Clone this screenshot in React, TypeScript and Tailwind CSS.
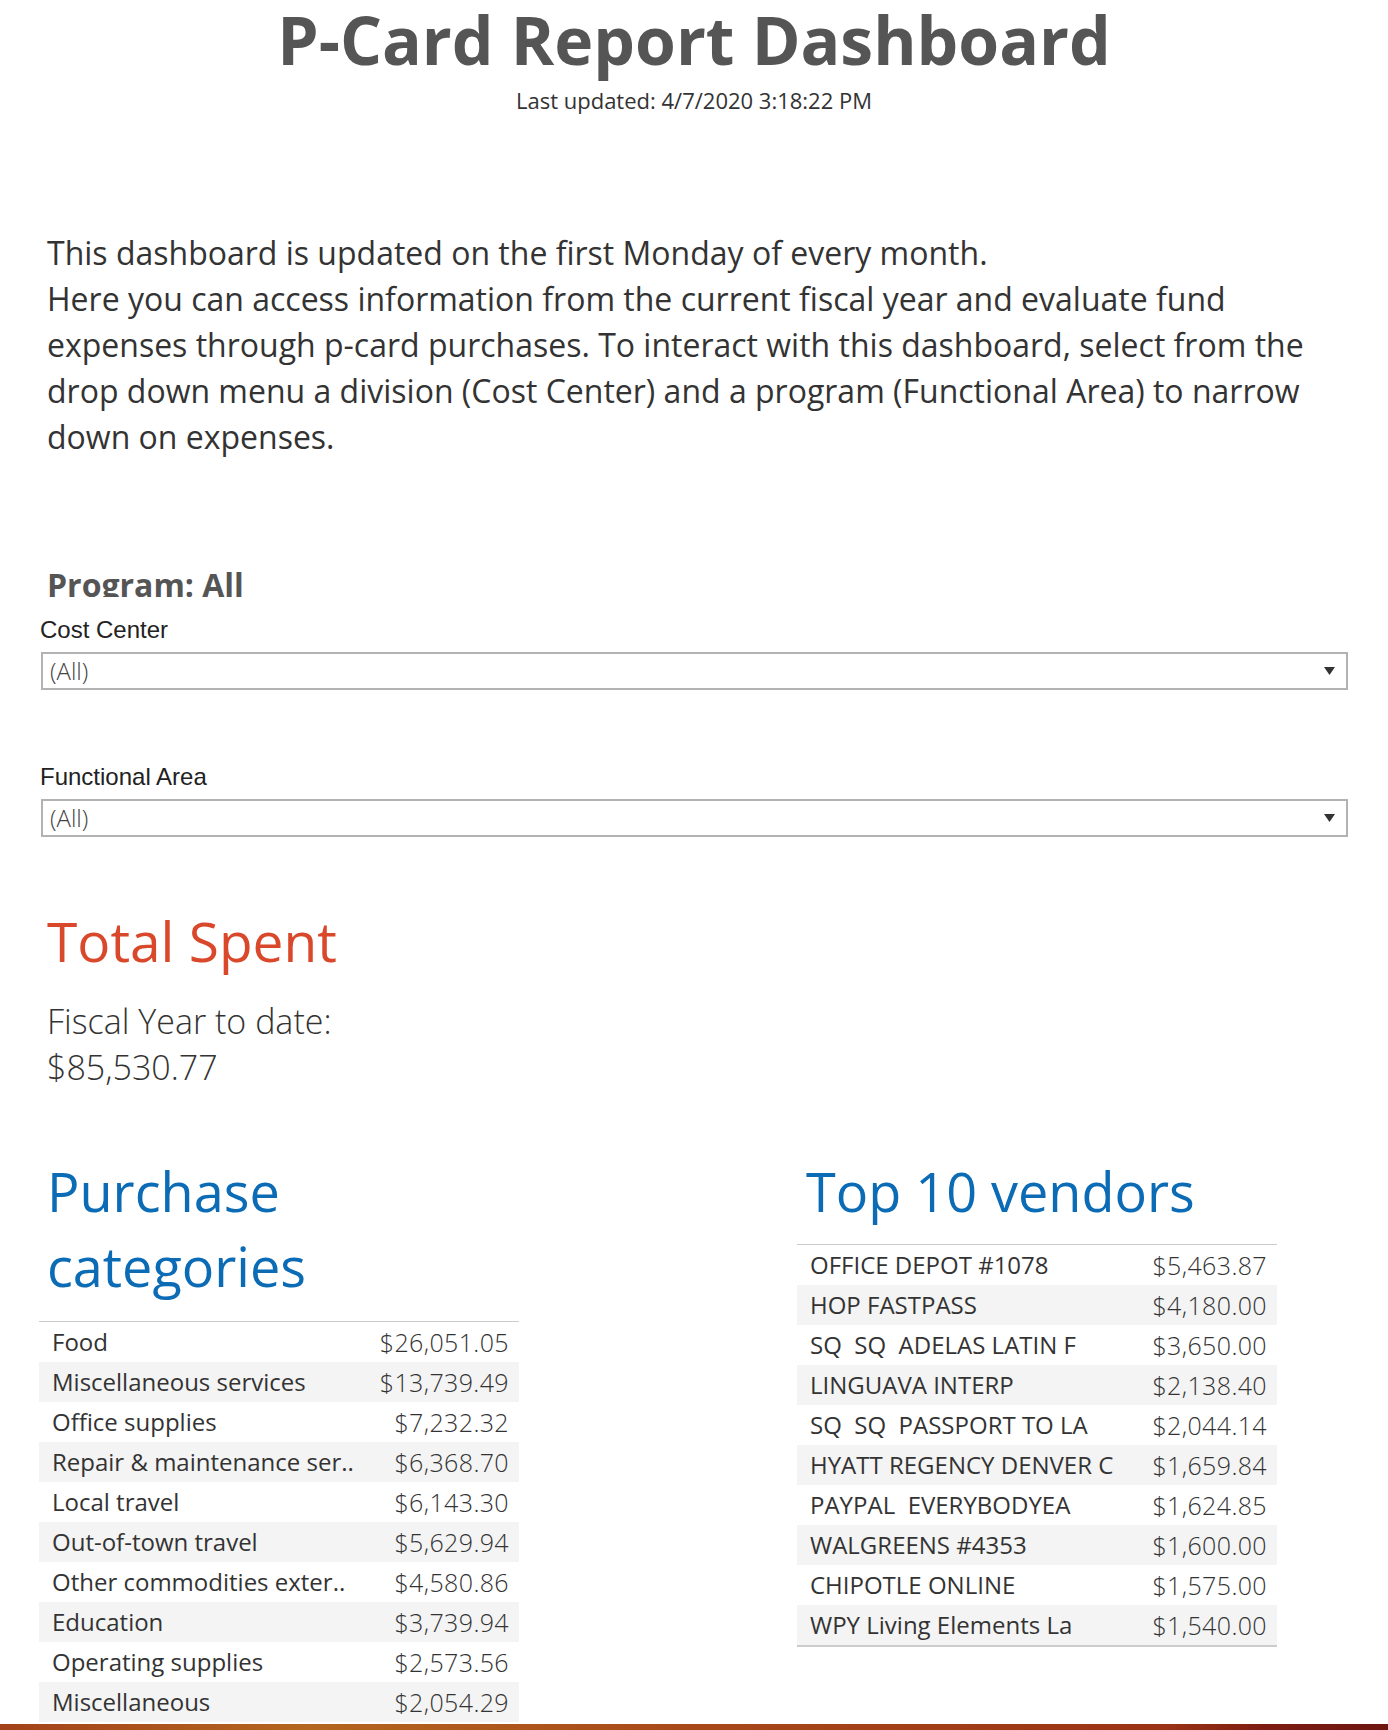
const categorias = [
  { nombre: "Food", valor: "$26,051.05" },
  { nombre: "Miscellaneous services", valor: "$13,739.49" },
  { nombre: "Office supplies", valor: "$7,232.32" },
  { nombre: "Repair & maintenance ser..", valor: "$6,368.70" },
  { nombre: "Local travel", valor: "$6,143.30" },
  { nombre: "Out-of-town travel", valor: "$5,629.94" },
  { nombre: "Other commodities exter..", valor: "$4,580.86" },
  { nombre: "Education", valor: "$3,739.94" },
  { nombre: "Operating supplies", valor: "$2,573.56" },
  { nombre: "Miscellaneous", valor: "$2,054.29" },
];

const vendedores = [
  { nombre: "OFFICE DEPOT #1078", valor: "$5,463.87" },
  { nombre: "HOP FASTPASS", valor: "$4,180.00" },
  { nombre: "SQ  SQ  ADELAS LATIN F", valor: "$3,650.00" },
  { nombre: "LINGUAVA INTERP", valor: "$2,138.40" },
  { nombre: "SQ  SQ  PASSPORT TO LA", valor: "$2,044.14" },
  { nombre: "HYATT REGENCY DENVER C", valor: "$1,659.84" },
  { nombre: "PAYPAL  EVERYBODYEA", valor: "$1,624.85" },
  { nombre: "WALGREENS #4353", valor: "$1,600.00" },
  { nombre: "CHIPOTLE ONLINE", valor: "$1,575.00" },
  { nombre: "WPY Living Elements La", valor: "$1,540.00" },
];

const parrafo = [
  "This dashboard is updated on the first Monday of every month.",
  "Here you can access information from the current fiscal year and evaluate fund",
  "expenses through p-card purchases. To interact with this dashboard, select from the",
  "drop down menu a division (Cost Center) and a program (Functional Area) to narrow",
  "down on expenses.",
];

function Filtro({ label, mt }: { label: string; mt: string }) {
  return (
    <div className={`${mt} ml-[40px] w-[1308px]`}>
      <div className="h-[26px] text-[24px] leading-[26px] text-[#222] font-['Liberation_Sans',Arial,sans-serif]">
        {label}
      </div>
      <div className="mt-[9px] ml-[1px] h-[38px] border-2 border-[#b2b2b2] bg-white flex items-center justify-between pl-[7px] pr-[11px]">
        <span className="text-[24px] leading-none font-light text-[#444]">(All)</span>
        <svg width="11" height="8" viewBox="0 0 11 8">
          <polygon points="0,0 11,0 5.5,8" fill="#333" />
        </svg>
      </div>
    </div>
  );
}

function Tabla({ filas, bordeFinal }: { filas: { nombre: string; valor: string }[]; bordeFinal?: boolean }) {
  return (
    <div className={`w-[480px] border-t border-[#cccccc] ${bordeFinal ? "border-b-2" : ""}`}>
      {filas.map((fila, i) => (
        <div
          key={fila.nombre}
          className={`h-[40px] flex items-center justify-between pl-[13px] pr-[10px] text-[24px] leading-[40px] text-[#333] ${
            i % 2 === 1 ? "bg-[#f4f4f4]" : "bg-white"
          }`}
        >
          <span className="whitespace-pre">{fila.nombre}</span>
          <span className="font-light text-[25px] tracking-[0.015em]">{fila.valor}</span>
        </div>
      ))}
    </div>
  );
}

export default function App() {
  return (
    <div className="w-[1388px] h-[1730px] bg-white flex flex-col overflow-hidden font-['Open_Sans',sans-serif]">
      <div className="flex-1 min-h-0 overflow-hidden flex flex-col">
        {/* Encabezado */}
        <h1 className="h-[78px] text-center text-[66px] leading-[78px] font-bold text-[#555555]">
          P-Card Report Dashboard
        </h1>
        <p className="mt-[8px] h-[28px] text-center text-[22px] leading-[28px] text-[#333]">
          Last updated: 4/7/2020 3:18:22 PM
        </p>

        <div className="mt-[116px] ml-[47px] text-[32px] leading-[46px] text-[#333]">
          {parrafo.map((linea) => (
            <div key={linea} className="whitespace-nowrap">
              {linea}
            </div>
          ))}
        </div>

        <div className="mt-[109px] ml-[47px] h-[28px] overflow-hidden text-[32px] leading-[32px] font-bold text-[#555555]">
          Program: All
        </div>

        <Filtro label="Cost Center" mt="mt-[20px]" />
        <Filtro label="Functional Area" mt="mt-[74px]" />

        {/* Total */}
        <h2 className="mt-[76px] ml-[47px] h-[56px] text-[55px] leading-[56px] font-medium text-[#d9482b]">
          Total Spent
        </h2>
        <div className="mt-[29px] ml-[47px] text-[34px] leading-[46px] font-light text-[#333]">
          <div>Fiscal Year to date:</div>
          <div>$85,530.77</div>
        </div>

        {/* Tablas */}
        <div className="mt-[64px] flex">
          <div className="ml-[39px] flex flex-col">
            <h3 className="ml-[8px] text-[54px] leading-[75px] font-medium text-[#0b6bb5]">
              Purchase
              <br />
              categories
            </h3>
            <div className="mt-[17px]">
              <Tabla filas={categorias} />
            </div>
          </div>
          <div className="ml-[278px] flex flex-col">
            <h3 className="ml-[9px] text-[54px] leading-[75px] font-medium text-[#0b6bb5]">Top 10 vendors</h3>
            <div className="mt-[15px]">
              <Tabla filas={vendedores} bordeFinal />
            </div>
          </div>
        </div>
      </div>
      <div className="h-[6px] shrink-0 bg-[linear-gradient(90deg,#a3411a_0%,#b4661f_22%,#a8481a_50%,#9a3315_84%,#7d1c12_91%,#6e1610_100%)]" />
    </div>
  );
}
